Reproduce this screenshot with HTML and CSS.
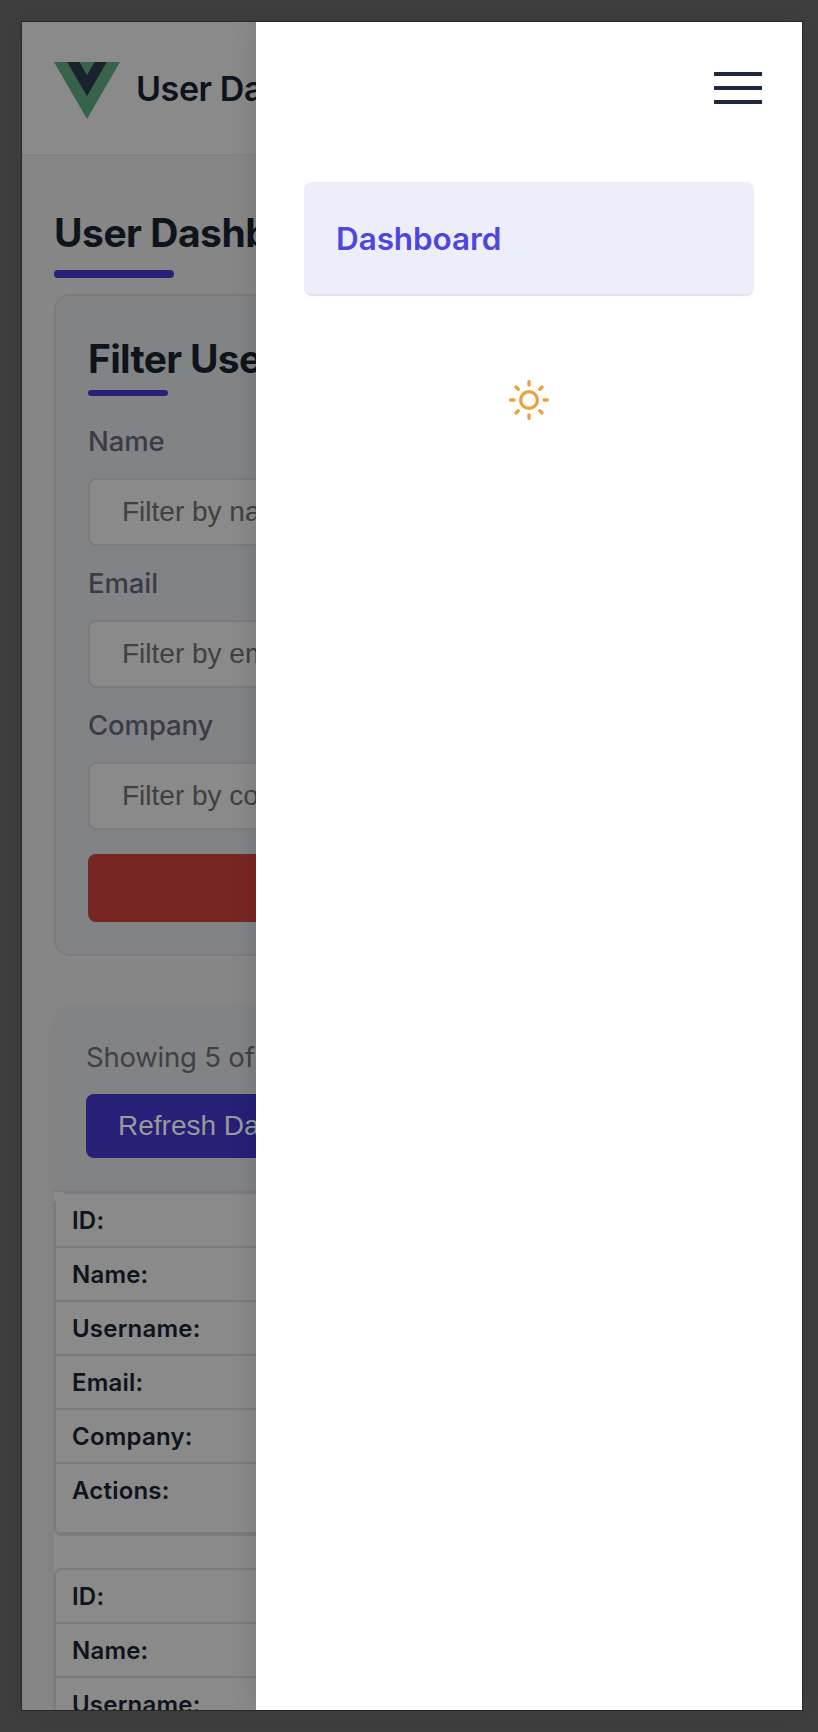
FILE: index.html
```html
<!DOCTYPE html>
<html lang="en">
<head>
<meta charset="utf-8">
<title>User Dashboard</title>
<link rel="stylesheet" href="styles.css">
</head>
<body>
<div class="window">
  <div class="page">
    <header class="header">
      <svg class="logo" width="66" height="57" viewBox="0 0 66 57"><path fill="#366349" d="M0 0h66L33 57z"/><path fill="#1b222f" d="M13.2 0h12.2L33 13.2 40.600 0h12.200L33 34.200z"/></svg>
      <span class="brand">User Dashboard</span>
    </header>
    <main class="main">
      <h1 class="title">User Dashboard</h1>
      <section class="filters">
        <h2 class="subtitle">Filter Users</h2>
        <label class="label">Name</label>
        <div class="input">Filter by name</div>
        <label class="label">Email</label>
        <div class="input">Filter by email</div>
        <label class="label">Company</label>
        <div class="input">Filter by company</div>
        <div class="reset"></div>
      </section>
      <section class="users">
        <div class="toolbar">
          <div class="count">Showing 5 of 10</div>
          <button class="refresh">Refresh Data</button>
        </div>
        <div class="cards">
          <div class="card">
            <div class="row">ID:</div>
            <div class="row">Name:</div>
            <div class="row">Username:</div>
            <div class="row">Email:</div>
            <div class="row">Company:</div>
            <div class="row actions">Actions:</div>
          </div>
          <div class="card">
            <div class="row">ID:</div>
            <div class="row">Name:</div>
            <div class="row">Username:</div>
          </div>
        </div>
      </section>
    </main>
  </div>
  <aside class="drawer">
    <div class="burger"><i></i><i></i><i></i></div>
    <a class="link">Dashboard</a>
    <svg class="sun" width="40" height="40" viewBox="0 0 40 40" fill="none" stroke="#e9a23b" stroke-width="3.300" stroke-linecap="round"><circle cx="20" cy="20" r="8.400"/><path d="M20 1.700v3.300M20 35v3.300M1.700 20H5M35 20h3.300M7 7l2.300 2.300M30.700 30.700L33 33M7 33l2.300-2.300M30.700 9.300L33 7"/></svg>
  </aside>
</div>
</body>
</html>
```
FILE: styles.css
```css
* { box-sizing: border-box; }
html { background: #3e3e3e; }
body { margin: 0; padding: 21px 15px 21px 21px; height: 1732px; overflow: hidden; font-family: Inter, "Liberation Sans", sans-serif; color: #0e131c; }
.window { position: relative; width: 782px; height: 1690px; border: 1px solid #272727; background: #868686; overflow: hidden; box-shadow: 0 0 20px rgba(0,0,0,.06); }
.header { height: 134px; display: flex; align-items: center; gap: 16px; padding: 2px 32px 2px; background: #8a8a8a; border-bottom: 2px solid #808282; }
.logo { flex: none; margin-top: 5px; }
.brand { font-size: 34px; line-height: 40px; font-weight: 600; letter-spacing: -.4px; white-space: nowrap; margin-top: 2px; }
.main { padding: 53px 32px 0; }
.title, .subtitle { margin: 0; font-size: 39px; line-height: 48px; font-weight: 700; letter-spacing: -.5px; white-space: nowrap; }
.subtitle { letter-spacing: -.7px; }
.title::after, .subtitle::after { content: ""; display: block; background: #262077; border-radius: 4px; }
.title::after { width: 120px; height: 8px; margin-top: 13px; }
.subtitle::after { width: 80px; height: 6px; margin-top: 7px; }
.filters { margin-top: 16px; height: 662px; padding: 39px 32px 0; border: 2px solid #7b7b80; border-radius: 16px; background: #828385; }
.label { display: block; height: 34px; margin-top: 28px; font-size: 27.500px; line-height: 34px; font-weight: 500; letter-spacing: -.1px; color: #3b3b47; }
.input { height: 68px; margin-top: 20px; padding: 0 32px; border: 2px solid #7a7a7f; border-radius: 8px; background: #8a8a8a; color: #404040; font: 28px/63px "Liberation Sans", Arial, sans-serif; white-space: nowrap; }
.input + .label { margin-top: 20px; }
.reset { height: 68px; margin-top: 24px; border-radius: 8px; background: #782623; }
.users { margin-top: 48px; border-radius: 16px; box-shadow: 0 12px 12px rgba(0,0,0,.05); }
.toolbar { height: 188px; padding: 36px 32px 0; background: #828385; border-bottom: 2px solid #7b7b80; border-radius: 16px 16px 0 0; }
.count { font-size: 27.500px; line-height: 34px; height: 34px; letter-spacing: -.2px; color: #3f3f49; white-space: nowrap; }
.refresh { display: block; width: 100%; height: 64px; margin-top: 20px; padding: 0 32px; border: 0; border-radius: 8px; background: #262077; color: #999; font: 28px/60px "Liberation Sans", Arial, sans-serif; text-align: left; }
.cards { background: #8a8a8a; display: flex; flex-direction: column; gap: 32px; }
.card { position: relative; border: 2px solid #7a7a7f; border-radius: 8px; }
.card:first-child::before { content: ""; position: absolute; left: -2px; top: -2px; width: 10px; height: 9px; background: #8b8b8b; border-bottom-right-radius: 8px; }
.row { height: 54px; padding-left: 16px; border-bottom: 2px solid #7a7a7f; font-size: 24px; line-height: 53px; font-weight: 600; letter-spacing: .2px; }
.actions { height: 70px; }
.drawer { position: absolute; top: 0; right: 0; bottom: 0; width: 546px; padding: 50px 48px 0; display: flex; flex-direction: column; background: #fff; box-shadow: 0 0 24px rgba(0,0,0,.13); }
.burger { align-self: flex-end; width: 48px; height: 32px; margin-right: -8px; display: flex; flex-direction: column; justify-content: space-between; }
.burger i { height: 4px; background: #1f273a; }
.link { height: 114px; margin-top: 78px; padding-left: 32px; border-bottom: 2px solid #e3e3eb; border-radius: 8px; background: #eeeefb; color: #4f46dc; font-size: 31.500px; line-height: 114px; font-weight: 600; letter-spacing: -.1px; }
.sun { align-self: center; margin-top: 84px; }
```
